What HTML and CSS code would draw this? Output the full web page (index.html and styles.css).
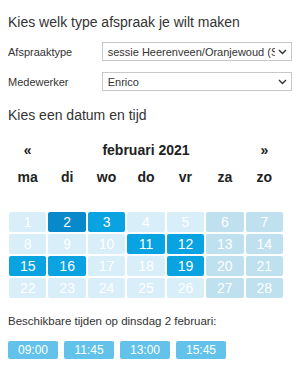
FILE: index.html
```html
<!DOCTYPE html>
<html lang="nl">
<head>
    <meta charset="UTF-8">
    <meta name="viewport" content="width=device-width, initial-scale=1.0">
    <title>Afspraak maken</title>
    <link rel="stylesheet" href="styles.css">
</head>
<body>
    <h2 class="title">Kies welk type afspraak je wilt maken</h2>

    <div class="form-row">
        <label for="type">Afspraaktype</label>
        <div class="select-wrap">
            <select id="type">
                <option>sessie Heerenveen/Oranjewoud (Skype)</option>
            </select>
            <svg class="chevron" width="9" height="6" viewBox="0 0 9 6"><path d="M1 1l3.5 3.5L8 1" fill="none" stroke="#333" stroke-width="1.4"/></svg>
        </div>
    </div>
    <div class="form-row">
        <label for="staff">Medewerker</label>
        <div class="select-wrap">
            <select id="staff">
                <option>Enrico</option>
            </select>
            <svg class="chevron" width="9" height="6" viewBox="0 0 9 6"><path d="M1 1l3.5 3.5L8 1" fill="none" stroke="#333" stroke-width="1.4"/></svg>
        </div>
    </div>

    <h2 class="title subtitle">Kies een datum en tijd</h2>

    <div class="calendar">
        <div class="cal-head">
            <span class="nav">&laquo;</span>
            <span class="month">februari 2021</span>
            <span class="nav">&raquo;</span>
        </div>
        <div class="weekdays">
            <span>ma</span><span>di</span><span>wo</span><span>do</span><span>vr</span><span>za</span><span>zo</span>
        </div>
        <div class="days" id="days"></div>
    </div>

    <p class="times-label">Beschikbare tijden op dinsdag 2 februari:</p>
    <div class="times">
        <button class="time">09:00</button>
        <button class="time">11:45</button>
        <button class="time">13:00</button>
        <button class="time">15:45</button>
    </div>

<script>
// build the month grid
const daysEl = document.getElementById('days');
const available = [2, 3, 11, 12, 15, 16, 19];
const selected = 2;

for (let d = 1; d <= 28; d++) {
    const cell = document.createElement('div');
    cell.className = 'day';
    const col = (d - 1) % 7;
    if (col >= 5) cell.classList.add('weekend');
    if (available.includes(d)) cell.classList.add('available');
    if (d === selected) cell.classList.add('selected');
    cell.textContent = d;
    daysEl.appendChild(cell);
}
</script>
</body>
</html>
```

FILE: styles.css
```css
:root {
    --blue: #0aa3e2;
    --blue-dark: #0889cc;
    --day-light: #d8eef9;
    --day-weekend: #bee0ef;
    --time-blue: #62c2ea;
    --text: #222;
}

body {
    margin: 8px;
    font-family: 'Liberation Sans', Arial, sans-serif;
    color: var(--text);
    background: #fff;
}

.title {
    font-size: 14px;
    font-weight: normal;
    line-height: 20px;
    margin: 4px 0 10px;
    color: #333;
}

.subtitle {
    margin: 14px 0 0;
}

.form-row {
    display: flex;
    align-items: center;
    margin-bottom: 11px;
}

.form-row label {
    width: 94px;
    font-size: 11px;
    color: #333;
}

.select-wrap {
    position: relative;
    width: 191px;
}

.select-wrap select {
    appearance: none;
    -webkit-appearance: none;
    width: 100%;
    height: 19px;
    border: 1px solid #c8c8c8;
    border-radius: 0;
    background: #fff;
    font-family: inherit;
    font-size: 11px;
    color: #333;
    padding: 0 16px 0 5px;
    display: block;
}

.chevron {
    position: absolute;
    right: 5px;
    top: 7px;
    pointer-events: none;
}

.calendar {
    width: 274px;
    margin: 15px 0 0 1px;
}

.cal-head,
.weekdays,
.days {
    display: grid;
    grid-template-columns: repeat(7, 1fr);
    column-gap: 2px;
}

.cal-head {
    font-size: 14px;
    font-weight: bold;
    height: 20px;
    line-height: 20px;
    text-align: center;
}

.cal-head .month {
    grid-column: span 5;
}

.weekdays {
    margin-top: 7px;
    font-size: 14px;
    font-weight: bold;
    line-height: 20px;
    text-align: center;
}

.days {
    margin-top: 25px;
    row-gap: 2px;
}

.day {
    height: 20px;
    line-height: 20px;
    text-align: center;
    font-size: 14px;
    color: #fff;
    background: var(--day-light);
    border-radius: 2px;
}

.day.weekend {
    background: var(--day-weekend);
}

.day.available {
    background: var(--blue);
}

.day.selected {
    background: var(--blue-dark);
}

.times-label {
    font-size: 11.5px;
    color: #333;
    margin: 17px 0 14px;
}

.times {
    display: flex;
    gap: 6px;
}

.time {
    width: 50px;
    height: 18px;
    padding: 0;
    border: none;
    border-radius: 2px;
    background: var(--time-blue);
    color: #fff;
    font-family: inherit;
    font-size: 12px;
}
```
